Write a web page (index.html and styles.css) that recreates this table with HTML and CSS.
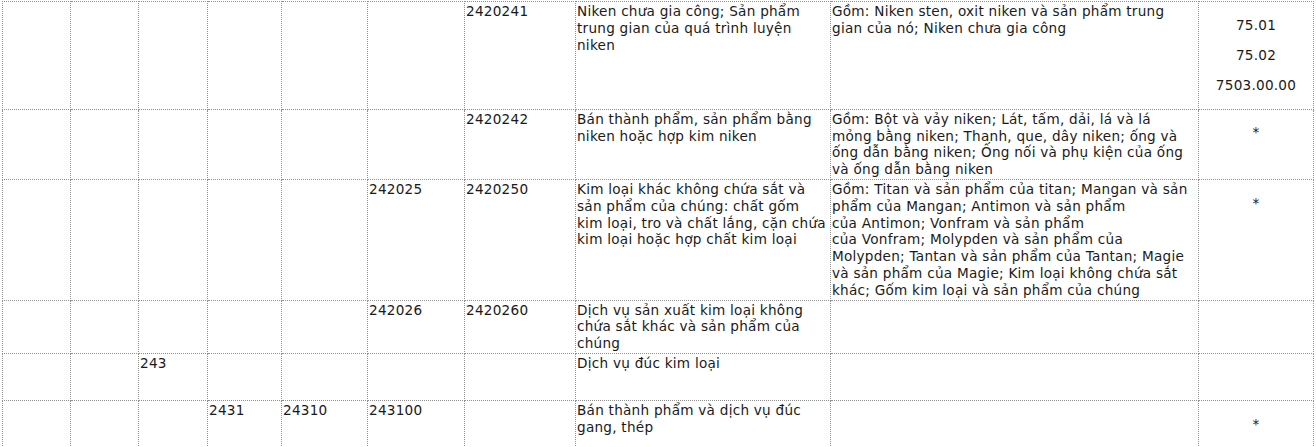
FILE: index.html
```html
<!DOCTYPE html>
<html lang="vi">
<head>
<meta charset="utf-8">
<title>Bảng mã</title>
<link rel="stylesheet" href="styles.css">
</head>
<body>
<table class="codes">
  <colgroup>
    <col class="c1"><col class="c2"><col class="c3"><col class="c4"><col class="c5">
    <col class="c6"><col class="c7"><col class="c8"><col class="c9"><col class="c10">
  </colgroup>
  <tbody>
    <tr>
      <td></td><td></td><td></td><td></td><td></td><td></td>
      <td>2420241</td>
      <td>Niken chưa gia công; Sản phẩm<br>trung gian của quá trình luyện<br>niken</td>
      <td>Gồm: Niken sten, oxit niken và sản phẩm trung<br>gian của nó; Niken chưa gia công</td>
      <td class="hs"><p>75.01</p><p>75.02</p><p>7503.00.00</p></td>
    </tr>
    <tr>
      <td></td><td></td><td></td><td></td><td></td><td></td>
      <td>2420242</td>
      <td>Bán thành phẩm, sản phẩm bằng<br>niken hoặc hợp kim niken</td>
      <td>Gồm: Bột và vảy niken; Lát, tấm, dải, lá và lá<br>mỏng bằng niken; Thanh, que, dây niken; ống và<br>ống dẫn bằng niken; Ống nối và phụ kiện của ống<br>và ống dẫn bằng niken</td>
      <td class="hs"><p>*</p></td>
    </tr>
    <tr>
      <td></td><td></td><td></td><td></td><td></td>
      <td>242025</td>
      <td>2420250</td>
      <td>Kim loại khác không chứa sắt và<br>sản phẩm của chúng: chất gốm<br>kim loại, tro và chất lắng, cặn chứa<br>kim loại hoặc hợp chất kim loại</td>
      <td>Gồm: Titan và sản phẩm của titan; Mangan và sản<br>phẩm của Mangan; Antimon và sản phẩm<br>của Antimon; Vonfram và sản phẩm<br>của Vonfram; Molypden và sản phẩm của<br>Molypden; Tantan và sản phẩm của Tantan; Magie<br>và sản phẩm của Magie; Kim loại không chứa sắt<br>khác; Gốm kim loại và sản phẩm của chúng</td>
      <td class="hs"><p>*</p></td>
    </tr>
    <tr>
      <td></td><td></td><td></td><td></td><td></td>
      <td>242026</td>
      <td>2420260</td>
      <td>Dịch vụ sản xuất kim loại không<br>chứa sắt khác và sản phẩm của<br>chúng</td>
      <td></td>
      <td class="hs"><p>&nbsp;</p></td>
    </tr>
    <tr>
      <td></td><td></td>
      <td>243</td>
      <td></td><td></td><td></td><td></td>
      <td>Dịch vụ đúc kim loại</td>
      <td></td>
      <td class="hs"><p>&nbsp;</p></td>
    </tr>
    <tr>
      <td></td><td></td><td></td>
      <td>2431</td>
      <td>24310</td>
      <td>243100</td>
      <td></td>
      <td>Bán thành phẩm và dịch vụ đúc<br>gang, thép</td>
      <td></td>
      <td class="hs"><p>*</p></td>
    </tr>
  </tbody>
</table>
</body>
</html>
```
FILE: styles.css
```css
html, body {
  margin: 0;
  padding: 0;
  background: #fff;
}

body {
  font-family: "DejaVu Sans", Verdana, sans-serif;
  font-size: 13.6px;
  line-height: 16.8px;
  letter-spacing: 0.25px;
  color: #1a1a1a;
}

.codes {
  margin: 1px 0 0 2px;
  width: 1312px;
  table-layout: fixed;
  border-collapse: collapse;
  border: 1px dotted #8f8f8f;
}

.codes td {
  border: 1px dotted #8f8f8f;
  padding: 1px;
  vertical-align: top;
  text-align: left;
  white-space: nowrap;
  overflow: hidden;
}

.c1 { width: 68px; }
.c2 { width: 68px; }
.c3 { width: 69px; }
.c4 { width: 74px; }
.c5 { width: 86px; }
.c6 { width: 97px; }
.c7 { width: 111px; }
.c8 { width: 255px; }
.c9 { width: 368px; }
.c10 { width: 115px; }

.codes td.hs {
  text-align: center;
}

.hs p {
  margin: 13.6px 0;
}
```
